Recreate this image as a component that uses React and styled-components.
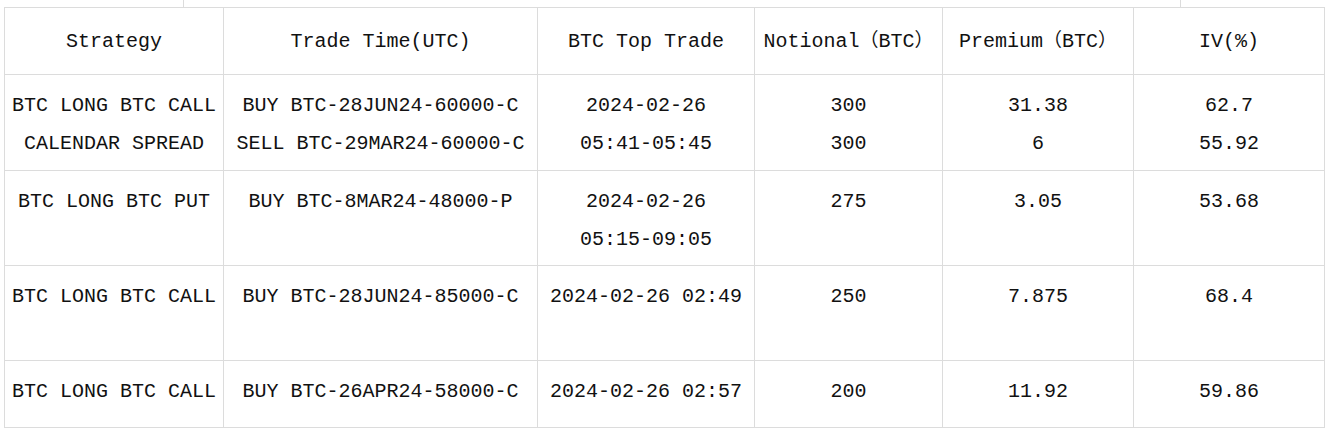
import React from "react";
import styled, { createGlobalStyle } from "styled-components";

const Global = createGlobalStyle`
  html, body { margin: 0; padding: 0; background: #ffffff; }
  body { font-family: "Liberation Mono", "Noto Sans CJK SC", monospace; }
`;

const Page = styled.div`
  width: 1329px;
  height: 429px;
  overflow: hidden;
  background: #fff;
`;

const TopStrip = styled.div`
  display: grid;
  grid-template-columns: 184px 997px 1fr;
  height: 7px;
`;

const StripCell = styled.div`
  border-right: ${(p) => (p.$last ? "none" : "1px solid #dcdcdc")};
`;

const TableWrap = styled.div`
  padding-left: 4px;
`;

const Grid = styled.div`
  display: grid;
  grid-template-columns: 219px 314px 217px 188px 191px 191px;
  grid-template-rows: 67px 96px 95px 95px 67px;
  width: 1321px;
  border-left: 1px solid #dcdcdc;
  border-top: 1px solid #dcdcdc;
  box-sizing: border-box;
`;

const Cell = styled.div`
  box-sizing: border-box;
  border-right: 1px solid #dcdcdc;
  border-bottom: 1px solid #dcdcdc;
  display: flex;
  flex-direction: column;
  align-items: center;
  justify-content: ${(p) => (p.$head ? "center" : "flex-start")};
  padding-top: ${(p) => (p.$head ? "2px" : "12px")};
  font-family: "Liberation Mono", "Noto Sans CJK SC", monospace;
  font-size: 20px;
  line-height: 38px;
  color: #111;
  white-space: nowrap;
  text-align: center;
`;

const Line = styled.span`
  display: block;
`;

const Wide = styled.span`
  font-family: "Noto Sans CJK SC", sans-serif;
  font-size: 19px;
  line-height: 1;
`;

const headers = [
  ["Strategy"],
  ["Trade Time(UTC)"],
  ["BTC Top Trade"],
  ["Notional", true],
  ["Premium", true],
  ["IV(%)"],
];

const rows = [
  [
    ["BTC LONG BTC CALL", "CALENDAR SPREAD"],
    ["BUY BTC-28JUN24-60000-C", "SELL BTC-29MAR24-60000-C"],
    ["2024-02-26", "05:41-05:45"],
    ["300", "300"],
    ["31.38", "6"],
    ["62.7", "55.92"],
  ],
  [
    ["BTC LONG BTC PUT"],
    ["BUY BTC-8MAR24-48000-P"],
    ["2024-02-26", "05:15-09:05"],
    ["275"],
    ["3.05"],
    ["53.68"],
  ],
  [
    ["BTC LONG BTC CALL"],
    ["BUY BTC-28JUN24-85000-C"],
    ["2024-02-26 02:49"],
    ["250"],
    ["7.875"],
    ["68.4"],
  ],
  [
    ["BTC LONG BTC CALL"],
    ["BUY BTC-26APR24-58000-C"],
    ["2024-02-26 02:57"],
    ["200"],
    ["11.92"],
    ["59.86"],
  ],
];

export default function App() {
  return (
    <Page>
      <Global />
      <TopStrip>
        <StripCell />
        <StripCell />
        <StripCell $last />
      </TopStrip>
      <TableWrap>
        <Grid>
          {headers.map(([h, unit]) => (
            <Cell $head key={h}>
              <Line>
                {h}
                {unit && <Wide>（</Wide>}
                {unit && "BTC"}
                {unit && <Wide>）</Wide>}
              </Line>
            </Cell>
          ))}
          {rows.map((r, i) =>
            r.map((c, j) => (
              <Cell key={`${i}-${j}`}>
                {c.map((l, k) => (
                  <Line key={k}>{l}</Line>
                ))}
              </Cell>
            ))
          )}
        </Grid>
      </TableWrap>
    </Page>
  );
}
